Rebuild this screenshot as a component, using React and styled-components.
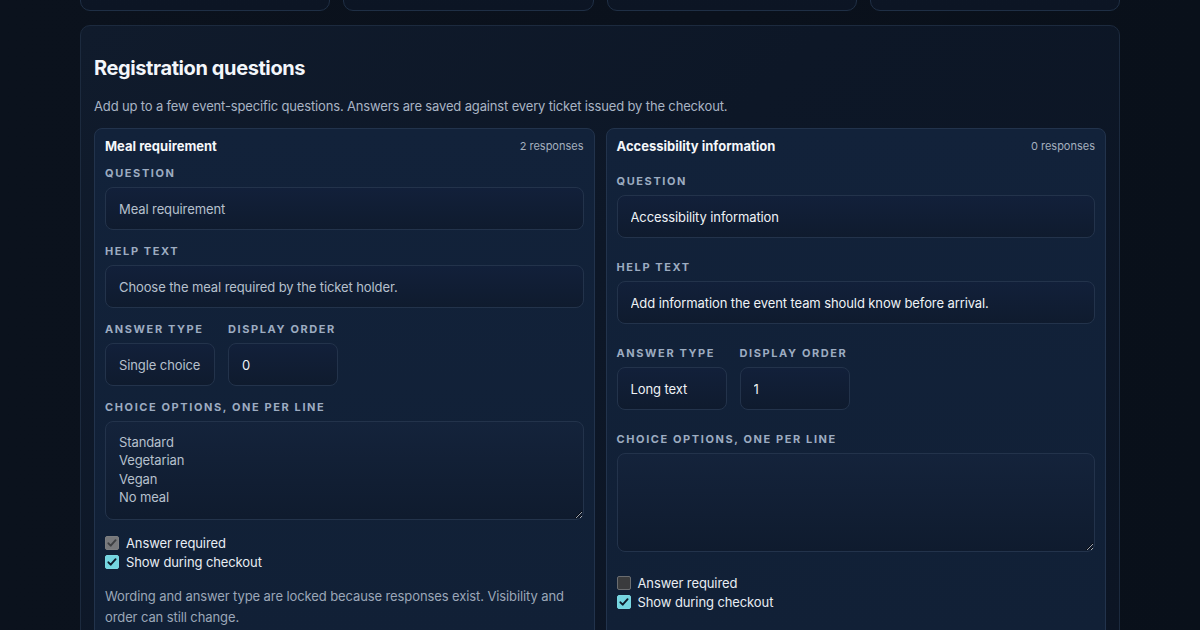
import styled, { createGlobalStyle } from "styled-components";

const GlobalStyle = createGlobalStyle`
    * { box-sizing: border-box; }
    html, body {
        margin: 0;
        background: #0a101b;
        overflow: hidden;
    }
    body {
        font-family: Inter, "Noto Sans", "Liberation Sans", sans-serif;
        color: #e8edf3;
        -webkit-font-smoothing: antialiased;
    }
`;

const stats = [
    {label: 'Tickets sold', value: '184'},
    {label: 'Checked in', value: '0'},
    {label: 'Revenue', value: '$9,420'},
    {label: 'Capacity left', value: '66'},
];

const questions = [
    {
        id: 'meal',
        title: 'Meal requirement',
        responses: 2,
        question: 'Meal requirement',
        help: 'Choose the meal required by the ticket holder.',
        type: 'Single choice',
        order: '0',
        options: 'Standard\nVegetarian\nVegan\nNo meal',
        required: true,
        visible: true,
        locked: true,
    },
    {
        id: 'access',
        title: 'Accessibility information',
        responses: 0,
        question: 'Accessibility information',
        help: 'Add information the event team should know before arrival.',
        type: 'Long text',
        order: '1',
        options: '',
        required: false,
        visible: true,
        locked: false,
    },
];

function Checkbox({checked, disabled, children}) {
    return (
        <CheckRow>
            <Box $checked={checked} $disabled={disabled}>
                {checked && (
                    <svg width="12" height="12" viewBox="0 0 12 12">
                        <path d="M2.4 6.3l2.3 2.4L9.6 3.2" fill="none"
                              stroke={disabled ? '#3d3f42' : '#0d1a2a'} strokeWidth="1.9"
                              strokeLinecap="round" strokeLinejoin="round"/>
                    </svg>
                )}
            </Box>
            {children}
        </CheckRow>
    );
}

function QuestionCard({q}) {
    return (
        <Card>
            <CardHeader>
                <h3>{q.title}</h3>
                <span>{q.responses} responses</span>
            </CardHeader>
            <Field>
                <Label>Question</Label>
                <TextInput value={q.question} readOnly $muted={q.locked}/>
            </Field>
            <Field>
                <Label>Help text</Label>
                <TextInput value={q.help} readOnly $muted={q.locked}/>
            </Field>
            <FieldRow>
                <Field>
                    <Label>Answer type</Label>
                    <SmallInput value={q.type} readOnly $muted={q.locked}/>
                </Field>
                <Field>
                    <Label>Display order</Label>
                    <SmallInput value={q.order} readOnly/>
                </Field>
            </FieldRow>
            <Field>
                <Label>Choice options, one per line</Label>
                <Options value={q.options} readOnly $muted={q.locked}/>
            </Field>
            <Checks>
                <Checkbox checked={q.required} disabled={q.locked}>Answer required</Checkbox>
                <Checkbox checked={q.visible}>Show during checkout</Checkbox>
            </Checks>
            {q.locked && (
                <Note>
                    Wording and answer type are locked because responses exist. Visibility and
                    order can still change.
                </Note>
            )}
        </Card>
    );
}

export default function App() {
    return (
        <Page>
            <GlobalStyle/>
            <StatsRow>
                {stats.map(s => (
                    <StatCard key={s.label}>
                        <span>{s.label}</span>
                        <strong>{s.value}</strong>
                    </StatCard>
                ))}
            </StatsRow>
            <Section>
                <Title>Registration questions</Title>
                <Description>Add up to a few event-specific questions. Answers are saved against every ticket issued by the checkout.</Description>
                <Grid>
                    {questions.map(q => <QuestionCard key={q.id} q={q}/>)}
                </Grid>
            </Section>
        </Page>
    );
}

const Page = styled.div`
    width: 1200px;
    padding: 0 80px;
    background: linear-gradient(90deg, #0b121d 0%, #0a111c 60%, #09101a 100%);
    min-height: 630px;
`;

const StatsRow = styled.div`
    display: grid;
    grid-template-columns: repeat(4, 1fr);
    gap: 13px;
    margin-top: -85px;
`;

const StatCard = styled.div`
    height: 96px;
    padding: 18px;
    border: 1px solid #1f2f45;
    border-radius: 10px;
    background: linear-gradient(180deg, #0d1727, #0c1524);
    display: flex;
    flex-direction: column;
    gap: 8px;

    span {
        font-size: 12px;
        color: #9aa7b9;
    }

    strong {
        font-size: 22px;
    }
`;

const Section = styled.section`
    margin-top: 14px;
    padding: 28px 13px 14px;
    border: 1px solid #1c2a3e;
    border-radius: 10px;
    background: linear-gradient(135deg, #101b2c 0%, #0d1727 45%, #0c1524 100%);
`;

const Title = styled.h2`
    margin: 0;
    font-size: 20px;
    line-height: 28px;
    font-weight: 700;
    color: #f3f6fa;
    letter-spacing: -0.4px;
`;

const Description = styled.p`
    margin: 14px 0 12px;
    font-size: 13px;
    line-height: 20px;
    letter-spacing: -0.15px;
    color: #a9b4c4;
`;

const Grid = styled.div`
    display: grid;
    grid-template-columns: 1fr 1fr;
    gap: 11px;
`;

// auto rows stretch, so the shorter card spreads its spare height across its rows
const Card = styled.div`
    display: grid;
    gap: 13px;
    padding: 10px 10px 20px;
    border: 1px solid #22334c;
    border-radius: 8px;
    background: linear-gradient(180deg, #12223a 0%, #112036 100%);
`;

const CardHeader = styled.div`
    display: flex;
    align-items: center;
    justify-content: space-between;
    height: 13px;

    h3 {
        margin: 0;
        font-size: 13px;
        font-weight: 700;
        color: #f5f7fa;
    }

    span {
        font-size: 11px;
        color: #a4afbe;
    }
`;

const Field = styled.div`
    display: flex;
    flex-direction: column;
    gap: 6px;
`;

const FieldRow = styled.div`
    display: flex;
    align-items: flex-start;
    gap: 13px;
`;

const Label = styled.label`
    font-size: 11px;
    line-height: 16px;
    font-weight: 700;
    letter-spacing: 1.6px;
    text-transform: uppercase;
    color: #9dacc1;
`;

const TextInput = styled.input`
    height: 43px;
    width: 100%;
    padding: 0 13px;
    border: 1px solid #23334b;
    border-radius: 8px;
    background: linear-gradient(180deg, #12203a 0%, #0f1b2e 100%);
    font: 13px Inter, "Noto Sans", "Liberation Sans", sans-serif;
    letter-spacing: -0.1px;
    color: ${p => p.$muted ? '#b6c0cd' : '#eef2f6'};
    outline: none;
`;

const SmallInput = styled(TextInput)`
    width: 110px;
`;

const Options = styled.textarea`
    height: 99px;
    width: 100%;
    padding: 11px 13px;
    resize: vertical;
    border: 1px solid #23334b;
    border-radius: 8px;
    background: linear-gradient(180deg, #14233b 0%, #0f1b2e 100%);
    font: 13px/18.3px Inter, "Noto Sans", "Liberation Sans", sans-serif;
    letter-spacing: -0.1px;
    color: ${p => p.$muted ? '#b6c0cd' : '#eef2f6'};
    outline: none;
`;

const Checks = styled.div`
    display: flex;
    flex-direction: column;
`;

const CheckRow = styled.label`
    display: flex;
    align-items: center;
    gap: 7px;
    height: 19px;
    font-size: 13px;
    letter-spacing: -0.1px;
    color: #e8edf3;
`;

const Box = styled.span`
    width: 14px;
    height: 14px;
    border-radius: 2px;
    display: flex;
    align-items: center;
    justify-content: center;
    border: 1px solid ${p => p.$checked ? (p.$disabled ? '#7d7e80' : '#7ad7e2') : '#6b6d70'};
    background: ${p => p.$checked ? (p.$disabled ? '#77787b' : '#74d5e0') : '#3a3b3d'};
`;

// tucks into the bottom padding a little
const Note = styled.p`
    margin: 2px 0 -9px;
    font-size: 13px;
    line-height: 21px;
    letter-spacing: -0.1px;
    color: #9ba7b8;
`;
